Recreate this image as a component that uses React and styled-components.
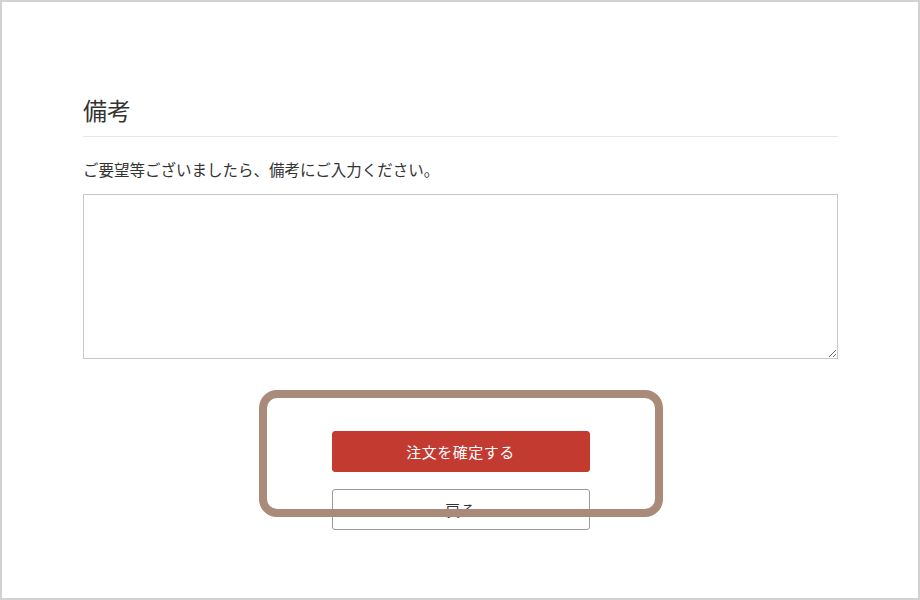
import React from 'react';
import styled, { createGlobalStyle } from 'styled-components';

const GlobalStyle = createGlobalStyle`
  html, body {
    margin: 0;
    padding: 0;
    background: #fff;
  }
  * {
    box-sizing: border-box;
  }
`;

const Frame = styled.div`
  width: 920px;
  height: 600px;
  border: 2px solid #d2d2d2;
  background: #fff;
  font-family: "Noto Sans CJK JP", "Noto Sans", sans-serif;
  color: #333;
  padding: 92px 80px 0 81px;
`;

const Section = styled.section`
  display: flex;
  flex-direction: column;
`;

const Title = styled.h2`
  margin: 0;
  font-size: 24px;
  font-weight: 400;
  line-height: 32px;
  color: #333;
  padding-bottom: 10px;
  border-bottom: 1px solid #e6e6e6;
`;

const Note = styled.p`
  margin: 21px 0 0;
  font-size: 15.5px;
  line-height: 22px;
  color: #333;
`;

const Remarks = styled.textarea`
  margin-top: 14px;
  width: 100%;
  height: 165px;
  border: 1px solid #c8c8c8;
  border-radius: 0;
  resize: vertical;
  font-family: inherit;
  padding: 8px;
  outline: none;
`;

const Actions = styled.div`
  position: relative;
  margin-top: 72px;
  display: flex;
  flex-direction: column;
  align-items: center;
  gap: 17px;
`;

const Button = styled.button`
  width: 258px;
  height: 41px;
  border-radius: 3px;
  font-family: inherit;
  font-size: 15px;
  letter-spacing: 0.5px;
  cursor: pointer;
  border: 1px solid ${p => (p.$primary ? '#c33a31' : '#9a9a9a')};
  background: ${p => (p.$primary ? '#c33a31' : '#fff')};
  color: ${p => (p.$primary ? '#fff' : '#333')};
`;

const Highlight = styled.div`
  position: absolute;
  left: 176px;
  top: -41px;
  width: 404px;
  height: 127px;
  border: 8px solid #aa8a78;
  border-radius: 18px;
  pointer-events: none;
`;

export default function App() {
  return (
    <>
      <GlobalStyle />
      <Frame>
        <Section>
          <Title>備考</Title>
          <Note>ご要望等ございましたら、備考にご入力ください。</Note>
          <Remarks />
          <Actions>
            <Button $primary>注文を確定する</Button>
            <Button>戻る</Button>
            <Highlight />
          </Actions>
        </Section>
      </Frame>
    </>
  );
}
